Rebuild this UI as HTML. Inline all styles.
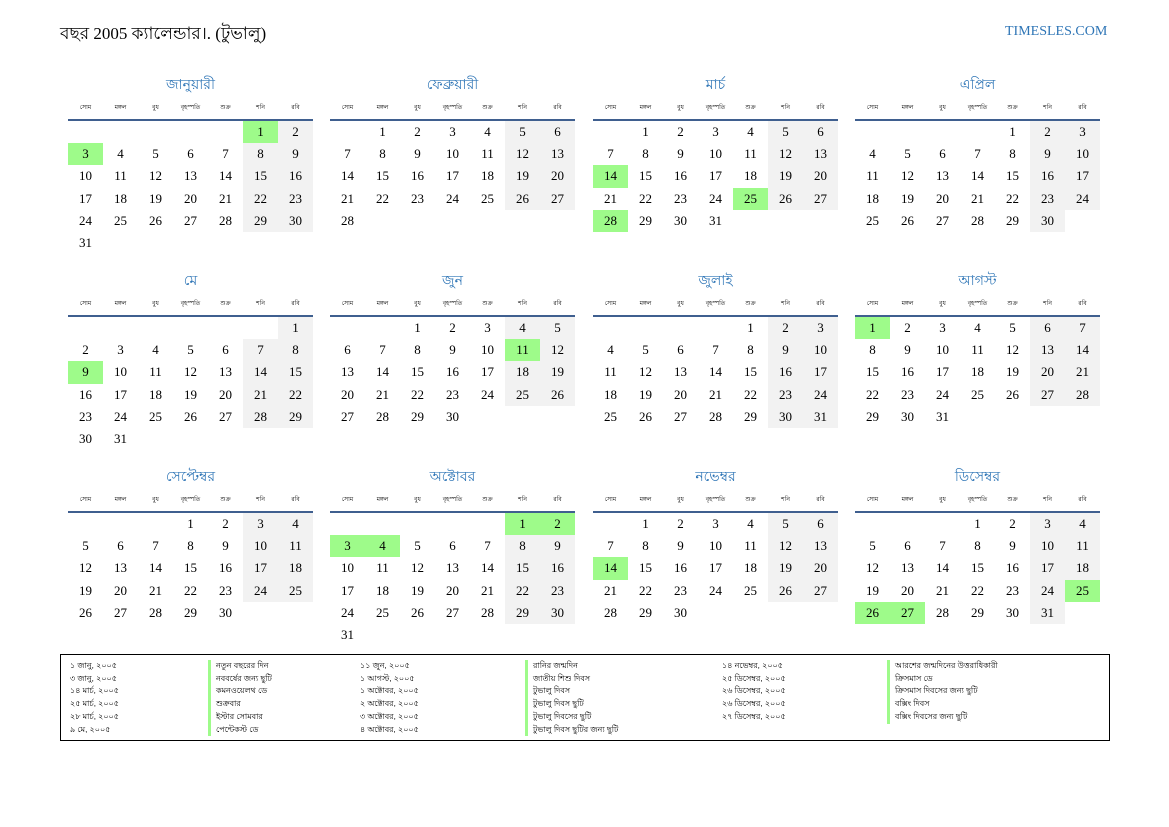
<!DOCTYPE html>
<html><head><meta charset="utf-8">
<style>
*{margin:0;padding:0;box-sizing:border-box}
body{width:1169px;height:827px;background:#fff;position:relative;font-family:"Liberation Serif","DejaVu Serif",serif;color:#000;overflow:hidden}
.hd{position:absolute;left:60px;top:21px;font-size:17px}
.site{position:absolute;left:1005px;top:24px;font-size:14px;color:#2e75b6}
.m{position:absolute;width:245px}
.t{height:20px;line-height:20px;text-align:center;color:#2e75b6;font-size:14px;font-family:"Liberation Sans","DejaVu Sans",sans-serif}
.wd{display:grid;grid-template-columns:repeat(7,35px);height:29px;line-height:32px;font-size:6px;text-align:center;font-family:"Liberation Sans","DejaVu Sans",sans-serif;border-bottom:2px solid #3f5f8f;margin-top:-2px}
.g{display:grid;grid-template-columns:repeat(7,35px);grid-auto-rows:22.2px;font-size:13px;text-align:center;line-height:22.2px}
.g i{font-style:normal}
.w{background:#f2f2f2}
.h{background:#9efb8a}
.lg{position:absolute;left:60px;top:654px;width:1050px;height:87px;border:1.5px solid #000;font-size:8px;font-family:"Liberation Sans","DejaVu Sans",sans-serif}
.c{position:absolute;top:5px;line-height:12.7px}
.c div{white-space:nowrap}
.n div{border-left:3px solid #9efb8a;padding-left:5px}
</style></head><body>
<div class="hd">বছর 2005 ক্যালেন্ডার।. (টুভালু)</div>
<div class="site">TIMESLES.COM</div>

<div class="m" style="left:68px;top:74px"><div class="t">জানুয়ারী</div><div class="wd"><span>সোম</span><span>মঙ্গল</span><span>বুধ</span><span>বৃহস্পতি</span><span>শুক্র</span><span>শনি</span><span>রবি</span></div><div class="g"><i></i><i></i><i></i><i></i><i></i><i class="h">1</i><i class="w">2</i><i class="h">3</i><i>4</i><i>5</i><i>6</i><i>7</i><i class="w">8</i><i class="w">9</i><i>10</i><i>11</i><i>12</i><i>13</i><i>14</i><i class="w">15</i><i class="w">16</i><i>17</i><i>18</i><i>19</i><i>20</i><i>21</i><i class="w">22</i><i class="w">23</i><i>24</i><i>25</i><i>26</i><i>27</i><i>28</i><i class="w">29</i><i class="w">30</i><i>31</i></div></div>

<div class="m" style="left:330px;top:74px"><div class="t">ফেব্রুয়ারী</div><div class="wd"><span>সোম</span><span>মঙ্গল</span><span>বুধ</span><span>বৃহস্পতি</span><span>শুক্র</span><span>শনি</span><span>রবি</span></div><div class="g"><i></i><i>1</i><i>2</i><i>3</i><i>4</i><i class="w">5</i><i class="w">6</i><i>7</i><i>8</i><i>9</i><i>10</i><i>11</i><i class="w">12</i><i class="w">13</i><i>14</i><i>15</i><i>16</i><i>17</i><i>18</i><i class="w">19</i><i class="w">20</i><i>21</i><i>22</i><i>23</i><i>24</i><i>25</i><i class="w">26</i><i class="w">27</i><i>28</i></div></div>

<div class="m" style="left:593px;top:74px"><div class="t">মার্চ</div><div class="wd"><span>সোম</span><span>মঙ্গল</span><span>বুধ</span><span>বৃহস্পতি</span><span>শুক্র</span><span>শনি</span><span>রবি</span></div><div class="g"><i></i><i>1</i><i>2</i><i>3</i><i>4</i><i class="w">5</i><i class="w">6</i><i>7</i><i>8</i><i>9</i><i>10</i><i>11</i><i class="w">12</i><i class="w">13</i><i class="h">14</i><i>15</i><i>16</i><i>17</i><i>18</i><i class="w">19</i><i class="w">20</i><i>21</i><i>22</i><i>23</i><i>24</i><i class="h">25</i><i class="w">26</i><i class="w">27</i><i class="h">28</i><i>29</i><i>30</i><i>31</i></div></div>

<div class="m" style="left:855px;top:74px"><div class="t">এপ্রিল</div><div class="wd"><span>সোম</span><span>মঙ্গল</span><span>বুধ</span><span>বৃহস্পতি</span><span>শুক্র</span><span>শনি</span><span>রবি</span></div><div class="g"><i></i><i></i><i></i><i></i><i>1</i><i class="w">2</i><i class="w">3</i><i>4</i><i>5</i><i>6</i><i>7</i><i>8</i><i class="w">9</i><i class="w">10</i><i>11</i><i>12</i><i>13</i><i>14</i><i>15</i><i class="w">16</i><i class="w">17</i><i>18</i><i>19</i><i>20</i><i>21</i><i>22</i><i class="w">23</i><i class="w">24</i><i>25</i><i>26</i><i>27</i><i>28</i><i>29</i><i class="w">30</i></div></div>

<div class="m" style="left:68px;top:270px"><div class="t">মে</div><div class="wd"><span>সোম</span><span>মঙ্গল</span><span>বুধ</span><span>বৃহস্পতি</span><span>শুক্র</span><span>শনি</span><span>রবি</span></div><div class="g"><i></i><i></i><i></i><i></i><i></i><i></i><i class="w">1</i><i>2</i><i>3</i><i>4</i><i>5</i><i>6</i><i class="w">7</i><i class="w">8</i><i class="h">9</i><i>10</i><i>11</i><i>12</i><i>13</i><i class="w">14</i><i class="w">15</i><i>16</i><i>17</i><i>18</i><i>19</i><i>20</i><i class="w">21</i><i class="w">22</i><i>23</i><i>24</i><i>25</i><i>26</i><i>27</i><i class="w">28</i><i class="w">29</i><i>30</i><i>31</i></div></div>

<div class="m" style="left:330px;top:270px"><div class="t">জুন</div><div class="wd"><span>সোম</span><span>মঙ্গল</span><span>বুধ</span><span>বৃহস্পতি</span><span>শুক্র</span><span>শনি</span><span>রবি</span></div><div class="g"><i></i><i></i><i>1</i><i>2</i><i>3</i><i class="w">4</i><i class="w">5</i><i>6</i><i>7</i><i>8</i><i>9</i><i>10</i><i class="h">11</i><i class="w">12</i><i>13</i><i>14</i><i>15</i><i>16</i><i>17</i><i class="w">18</i><i class="w">19</i><i>20</i><i>21</i><i>22</i><i>23</i><i>24</i><i class="w">25</i><i class="w">26</i><i>27</i><i>28</i><i>29</i><i>30</i></div></div>

<div class="m" style="left:593px;top:270px"><div class="t">জুলাই</div><div class="wd"><span>সোম</span><span>মঙ্গল</span><span>বুধ</span><span>বৃহস্পতি</span><span>শুক্র</span><span>শনি</span><span>রবি</span></div><div class="g"><i></i><i></i><i></i><i></i><i>1</i><i class="w">2</i><i class="w">3</i><i>4</i><i>5</i><i>6</i><i>7</i><i>8</i><i class="w">9</i><i class="w">10</i><i>11</i><i>12</i><i>13</i><i>14</i><i>15</i><i class="w">16</i><i class="w">17</i><i>18</i><i>19</i><i>20</i><i>21</i><i>22</i><i class="w">23</i><i class="w">24</i><i>25</i><i>26</i><i>27</i><i>28</i><i>29</i><i class="w">30</i><i class="w">31</i></div></div>

<div class="m" style="left:855px;top:270px"><div class="t">আগস্ট</div><div class="wd"><span>সোম</span><span>মঙ্গল</span><span>বুধ</span><span>বৃহস্পতি</span><span>শুক্র</span><span>শনি</span><span>রবি</span></div><div class="g"><i class="h">1</i><i>2</i><i>3</i><i>4</i><i>5</i><i class="w">6</i><i class="w">7</i><i>8</i><i>9</i><i>10</i><i>11</i><i>12</i><i class="w">13</i><i class="w">14</i><i>15</i><i>16</i><i>17</i><i>18</i><i>19</i><i class="w">20</i><i class="w">21</i><i>22</i><i>23</i><i>24</i><i>25</i><i>26</i><i class="w">27</i><i class="w">28</i><i>29</i><i>30</i><i>31</i></div></div>

<div class="m" style="left:68px;top:466px"><div class="t">সেপ্টেম্বর</div><div class="wd"><span>সোম</span><span>মঙ্গল</span><span>বুধ</span><span>বৃহস্পতি</span><span>শুক্র</span><span>শনি</span><span>রবি</span></div><div class="g"><i></i><i></i><i></i><i>1</i><i>2</i><i class="w">3</i><i class="w">4</i><i>5</i><i>6</i><i>7</i><i>8</i><i>9</i><i class="w">10</i><i class="w">11</i><i>12</i><i>13</i><i>14</i><i>15</i><i>16</i><i class="w">17</i><i class="w">18</i><i>19</i><i>20</i><i>21</i><i>22</i><i>23</i><i class="w">24</i><i class="w">25</i><i>26</i><i>27</i><i>28</i><i>29</i><i>30</i></div></div>

<div class="m" style="left:330px;top:466px"><div class="t">অক্টোবর</div><div class="wd"><span>সোম</span><span>মঙ্গল</span><span>বুধ</span><span>বৃহস্পতি</span><span>শুক্র</span><span>শনি</span><span>রবি</span></div><div class="g"><i></i><i></i><i></i><i></i><i></i><i class="h">1</i><i class="h">2</i><i class="h">3</i><i class="h">4</i><i>5</i><i>6</i><i>7</i><i class="w">8</i><i class="w">9</i><i>10</i><i>11</i><i>12</i><i>13</i><i>14</i><i class="w">15</i><i class="w">16</i><i>17</i><i>18</i><i>19</i><i>20</i><i>21</i><i class="w">22</i><i class="w">23</i><i>24</i><i>25</i><i>26</i><i>27</i><i>28</i><i class="w">29</i><i class="w">30</i><i>31</i></div></div>

<div class="m" style="left:593px;top:466px"><div class="t">নভেম্বর</div><div class="wd"><span>সোম</span><span>মঙ্গল</span><span>বুধ</span><span>বৃহস্পতি</span><span>শুক্র</span><span>শনি</span><span>রবি</span></div><div class="g"><i></i><i>1</i><i>2</i><i>3</i><i>4</i><i class="w">5</i><i class="w">6</i><i>7</i><i>8</i><i>9</i><i>10</i><i>11</i><i class="w">12</i><i class="w">13</i><i class="h">14</i><i>15</i><i>16</i><i>17</i><i>18</i><i class="w">19</i><i class="w">20</i><i>21</i><i>22</i><i>23</i><i>24</i><i>25</i><i class="w">26</i><i class="w">27</i><i>28</i><i>29</i><i>30</i></div></div>

<div class="m" style="left:855px;top:466px"><div class="t">ডিসেম্বর</div><div class="wd"><span>সোম</span><span>মঙ্গল</span><span>বুধ</span><span>বৃহস্পতি</span><span>শুক্র</span><span>শনি</span><span>রবি</span></div><div class="g"><i></i><i></i><i></i><i>1</i><i>2</i><i class="w">3</i><i class="w">4</i><i>5</i><i>6</i><i>7</i><i>8</i><i>9</i><i class="w">10</i><i class="w">11</i><i>12</i><i>13</i><i>14</i><i>15</i><i>16</i><i class="w">17</i><i class="w">18</i><i>19</i><i>20</i><i>21</i><i>22</i><i>23</i><i class="w">24</i><i class="h">25</i><i class="h">26</i><i class="h">27</i><i>28</i><i>29</i><i>30</i><i class="w">31</i></div></div>

<div class="lg">
<div class="c" style="left:9px"><div>১ জানু, ২০০৫</div><div>৩ জানু, ২০০৫</div><div>১৪ মার্চ, ২০০৫</div><div>২৫ মার্চ, ২০০৫</div><div>২৮ মার্চ, ২০০৫</div><div>৯ মে, ২০০৫</div></div>
<div class="c n" style="left:147px"><div>নতুন বছরের দিন</div><div>নববর্ষের জন্য ছুটি</div><div>কমনওয়েলথ ডে</div><div>শুক্রবার</div><div>ইস্টার সোমবার</div><div>পেন্টেকস্ট ডে</div></div>
<div class="c" style="left:299px"><div>১১ জুন, ২০০৫</div><div>১ আগস্ট, ২০০৫</div><div>১ অক্টোবর, ২০০৫</div><div>২ অক্টোবর, ২০০৫</div><div>৩ অক্টোবর, ২০০৫</div><div>৪ অক্টোবর, ২০০৫</div></div>
<div class="c n" style="left:464px"><div>রানির জন্মদিন</div><div>জাতীয় শিশু দিবস</div><div>টুভালু দিবস</div><div>টুভালু দিবস ছুটি</div><div>টুভালু দিবসের ছুটি</div><div>টুভালু দিবস ছুটির জন্য ছুটি</div></div>
<div class="c" style="left:661px"><div>১৪ নভেম্বর, ২০০৫</div><div>২৫ ডিসেম্বর, ২০০৫</div><div>২৬ ডিসেম্বর, ২০০৫</div><div>২৬ ডিসেম্বর, ২০০৫</div><div>২৭ ডিসেম্বর, ২০০৫</div></div>
<div class="c n" style="left:826px"><div>আরশের জন্মদিনের উত্তরাধিকারী</div><div>ক্রিসমাস ডে</div><div>ক্রিসমাস দিবসের জন্য ছুটি</div><div>বক্সিং দিবস</div><div>বক্সিং দিবসের জন্য ছুটি</div></div>
</div>
</body></html>
